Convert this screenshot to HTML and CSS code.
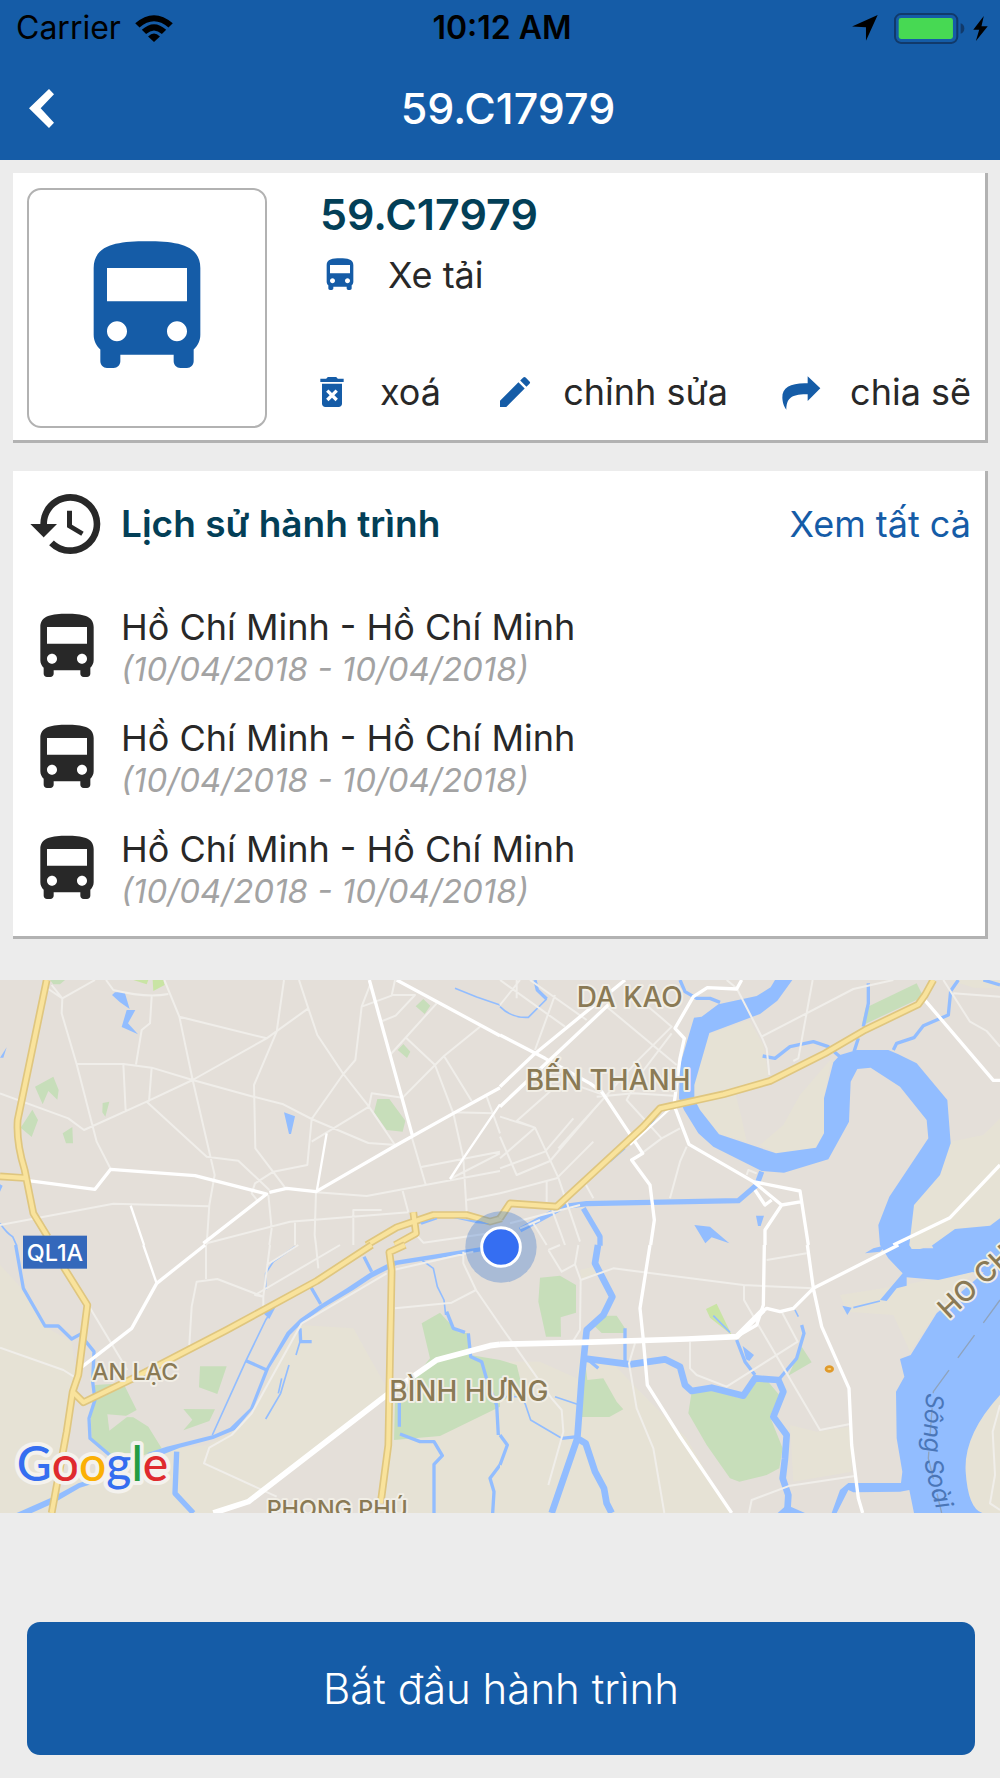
FILE: index.html
```html
<!DOCTYPE html>
<html lang="vi">
<head>
  <meta charset="UTF-8">
  <meta name="viewport" content="width=device-width, initial-scale=1.0">
  <title>59.C17979</title>
  <link rel="stylesheet" href="styles.css">
</head>
<body>
  <svg class="sprite" xmlns="http://www.w3.org/2000/svg">
    <symbol id="icon-bus" viewBox="0 0 24 24">
      <path d="M4 16c0 .88.39 1.67 1 2.22V20c0 .55.45 1 1 1h1c.55 0 1-.45 1-1v-1h8v1c0 .55.45 1 1 1h1c.55 0 1-.45 1-1v-1.78c.61-.55 1-1.34 1-2.22V6c0-3.5-3.58-4-8-4s-8 .5-8 4v10zm3.5 1c-.83 0-1.5-.67-1.5-1.5S6.67 14 7.5 14s1.5.67 1.5 1.5S8.33 17 7.5 17zm9 0c-.83 0-1.5-.67-1.5-1.5s.67-1.5 1.5-1.5 1.5.67 1.5 1.5-.67 1.5-1.5 1.5zm1.5-6H6V6h12v5z"/>
    </symbol>
  </svg>

  <header class="header">
    <div class="status-bar">
      <div class="status-left">
        <span>Carrier</span>
        <svg class="wifi" viewBox="0 0 114 82">
          <path d="M0 25Q57 -24 114 25L101 38Q57 0 13 38Z"/>
          <path d="M20 45Q57 11 94 45L81 58Q57 36 33 58Z"/>
          <path d="M39 65Q57 48 75 65L57 82Z"/>
        </svg>
      </div>
      <span class="status-time">10:12 AM</span>
      <div class="status-right">
        <svg class="location" viewBox="0 0 80 80"><path d="M79 0L43 79V38L0 35Z"/></svg>
        <svg class="battery" viewBox="0 0 212 92">
          <rect x="3" y="3" width="186" height="86" rx="18" fill="none" stroke="#113a6b" stroke-width="6"/>
          <rect x="14" y="15" width="162" height="62" rx="7" fill="#47d953"/>
          <path d="M199 30Q210 34 210 46T199 62Z" fill="#113a6b"/>
        </svg>
        <svg class="bolt" viewBox="0 0 44 76"><path d="M32 0L0 42H18L8 76L44 31H25Z"/></svg>
      </div>
    </div>
    <div class="nav-bar">
      <button class="back-btn" aria-label="Quay lại">
        <svg viewBox="0 0 75 117"><path d="M0 58L60 0L75 16L35 58L75 101L60 117Z"/></svg>
      </button>
      <h1>59.C17979</h1>
    </div>
  </header>

  <main>
    <section class="card vehicle">
      <div class="thumb">
        <svg class="icon-large"><use href="#icon-bus"/></svg>
      </div>
      <div class="vehicle-info">
        <h2>59.C17979</h2>
        <p class="vehicle-type">
          <svg class="icon"><use href="#icon-bus"/></svg>
          <span>Xe tải</span>
        </p>
        <div class="actions">
          <button class="action-btn">
            <svg class="icon" viewBox="0 0 24 24"><path d="M6 19c0 1.1.9 2 2 2h8c1.1 0 2-.9 2-2V7H6v12zm2.46-7.12l1.41-1.41L12 12.59l2.12-2.12 1.41 1.41L13.41 14l2.12 2.12-1.41 1.41L12 15.41l-2.12 2.12-1.41-1.41L10.59 14l-2.13-2.12zM15.5 4l-1-1h-5l-1 1H5v2h14V4z"/></svg>
            xoá
          </button>
          <button class="action-btn">
            <svg class="icon" viewBox="0 0 24 24"><path d="M3 17.25V21h3.75L17.81 9.94l-3.75-3.75L3 17.25zM20.71 7.04a1 1 0 0 0 0-1.41l-2.34-2.34a1 1 0 0 0-1.41 0l-1.83 1.83 3.75 3.75 1.83-1.83z"/></svg>
            chỉnh sửa
          </button>
          <button class="action-btn">
            <svg class="icon" viewBox="0 0 120 120"><path d="M115 49L77 13V34C28 32 0 46 1 77C2 96 8 106 13 113C14 80 26 66 77 67V87Z"/></svg>
            chia sẽ
          </button>
        </div>
      </div>
    </section>

    <section class="card history">
      <div class="history-header">
        <svg class="icon-medium" viewBox="0 0 24 24"><path d="M13 3c-4.97 0-9 4.03-9 9H1l3.89 3.89.07.14L9 12H6c0-3.87 3.13-7 7-7s7 3.13 7 7-3.13 7-7 7c-1.93 0-3.68-.79-4.94-2.06l-1.42 1.42A8.95 8.95 0 0 0 13 21a9 9 0 0 0 0-18zm-1 5v5l4.28 2.54.72-1.21-3.5-2.08V8H12z"/></svg>
        <h3>Lịch sử hành trình</h3>
        <a href="#">Xem tất cả</a>
      </div>
      <ul class="trips">
        <li class="trip">
          <svg class="icon-medium"><use href="#icon-bus"/></svg>
          <div>
            <p>Hồ Chí Minh - Hồ Chí Minh</p>
            <p class="trip-date">(10/04/2018 - 10/04/2018)</p>
          </div>
        </li>
        <li class="trip">
          <svg class="icon-medium"><use href="#icon-bus"/></svg>
          <div>
            <p>Hồ Chí Minh - Hồ Chí Minh</p>
            <p class="trip-date">(10/04/2018 - 10/04/2018)</p>
          </div>
        </li>
        <li class="trip">
          <svg class="icon-medium"><use href="#icon-bus"/></svg>
          <div>
            <p>Hồ Chí Minh - Hồ Chí Minh</p>
            <p class="trip-date">(10/04/2018 - 10/04/2018)</p>
          </div>
        </li>
      </ul>
    </section>

    <svg class="map" viewBox="0 0 3000 1599" xmlns="http://www.w3.org/2000/svg">
      <!-- north west -->
      <g transform="translate(0 -15)">
        <path class="park" d="M150 15H195L180 28H160ZM105 335L160 305L176 345L172 374L145 348L128 388ZM97 404L114 435L95 486L62 458ZM308 384L328 380L316 425L307 412ZM188 475L217 456L219 505H198ZM1247 94L1270 72L1291 92L1274 117ZM1193 225L1210 207L1231 230L1221 249ZM1132 372H1168L1216 437L1208 470L1160 465L1122 412Z"/>
        <path class="park-light" d="M400 15H445L440 28ZM458 15H490L494 30L460 48Z"/>
        <path class="water" d="M336 60L345 52H374L389 102L360 82ZM380 105H406L384 145L414 178L365 156ZM852 412L885 424L873 477H867ZM0 248L20 217L10 248ZM0 628L8 632L0 650Z"/>
        <path class="stream" d="M1365 40L1430 66L1500 90M0 745Q20 775 38 785L50 812"/>
        <path class="road-minor" d="M145 42L187 70L285 15M187 70L185 115L230 268L290 500L332 582M155 30L187 70M318 15L340 45Q440 70 505 57M493 15L538 125L578 315L644 600L628 690L620 810M538 125L800 190L578 315L440 380L252 465L205 430L0 355M230 267H370L455 278L578 315L760 365L850 388L935 432L1105 504L1190 510M370 267L377 408M455 278L447 380M455 65L450 145L425 165L408 268M852 15L830 170L762 330L766 520L857 640M800 190L925 100M897 15L925 100L952 180L1030 297L1107 395L1185 510M440 380L620 545L715 557L808 645M0 750L340 686L625 694M1110 30L1085 95L1066 255L1030 297L935 432L922 570L820 590L765 625L755 655L775 680M1085 95L1175 62L1185 15M1107 395L1115 355L1208 368L1332 243L1440 155M935 500L1107 395M1147 138L1187 122L1245 60H1175M1170 240L1310 85M1218 188L1305 270L1360 415L1390 550L1400 710M1332 243L1415 378M1360 412L1480 415M1235 485L1278 632M1260 577L1500 530M950 652L1100 663L1500 588M805 660L815 760L808 810M948 652L944 780L948 810M620 805L870 740L1225 712M1060 810V705H1145M885 740V810M1208 648L1225 712M1350 612L1500 535M1460 365L1500 475M1400 675L1500 655M1245 775L1270 803L1500 770"/>
        <path class="road" d="M85 617L285 643L332 583L585 602L800 657L610 805M808 652L860 640L948 650L1190 510L1360 415L1500 338M1108 15L1238 485M1190 15L1500 182"/>
        <path class="road thin" d="M980 475L950 650M1350 612L1390 550L1500 388M392 692L432 810"/>
        <path class="highway-edge" d="M140 15L53 435Q48 500 74 585L90 665L100 715L143 785M0 604L74 609M1100 810L1190 757L1300 720H1400L1470 740L1505 730M1185 810L1248 775L1240 712"/>
        <path class="highway" d="M140 15L53 435Q48 500 74 585L90 665L100 715L143 785M0 604L74 609M1100 810L1190 757L1300 720H1400L1470 740L1505 730M1185 810L1248 775L1240 712"/>
        <path class="water" d="M1260 743L1310 729L1312 733L1265 749ZM1360 729L1440 738L1470 748L1430 745Z"/>
      </g>

      <!-- north east -->
      <g transform="translate(1500 -15)">
        <path class="sand" d="M628 176L748 135L790 210L808 320L705 350L725 430L740 500L657 478L583 385V320ZM995 250L972 370V475L945 520L828 535L780 510L850 450L900 360ZM1350 15H1500V40L1420 38ZM1500 430L1450 480L1352 500L1320 600L1242 690L1225 790V810H1500Z"/>
        <path class="park" d="M1097 98L1250 25L1270 65L1085 152Z"/>
        <path class="water" d="M825 15H877L832 77L780 117L628 174L583 330V372L600 405L657 478L828 535L948 518L972 475V370L1000 262L1020 240L1070 225H1165L1195 238L1250 265L1342 375L1352 505L1320 600L1242 690L1228 810H1140L1135 750L1168 665L1285 490L1280 435L1200 335L1112 278L1072 282L1052 320L1047 440L985 553L852 593L785 588L640 515L595 475L552 405L537 370L540 270L582 128L605 125L655 88L770 63L812 37Z"/>
        <path class="water" d="M583 750L630 755L688 805L635 787L616 805ZM768 722H792L782 753H774ZM1295 812L1365 762L1470 752L1500 730V812Z"/>
        <path class="canal" d="M60 765L190 695L260 686L715 677L770 630L785 590"/>
        <path class="canal" d="M250 700L300 785V812"/>
        <path class="stream wide" d="M788 243L825 250L870 215L940 200L985 215L1020 245M1180 225L1190 205L1242 188L1270 152L1345 120L1352 48L1375 15M1105 25V85L1090 155M1075 190L1062 230M540 15L555 50L590 70H630L660 82M105 15L112 45L140 72M1450 15L1500 30"/>
        <path class="stream" d="M0 95Q35 130 85 127L140 72M465 430L445 460M375 520L330 560"/>
        <path class="road-minor" d="M0 15L195 155M50 15V70M90 15L260 135M165 60L105 225M0 90L60 15M320 95L530 270M445 95L515 155L410 260L280 405L175 520M515 175L420 300L380 375L485 490L540 460M0 425L105 458L175 608L240 800M105 458L50 438L155 345M105 458L0 550M0 580L135 530L220 430M0 485L50 600L150 558L280 405M0 655L170 610L280 500M140 620V680M255 625L280 670M290 365L400 355L520 362M325 365L240 335M560 515L540 560L510 670M680 15L710 40L785 185L800 220L808 300M785 185L1060 42L1180 15M938 15L895 250L880 258M1330 15L1410 140L1460 168L1500 215M1360 55L1500 65M30 745L240 690M100 745L140 810M155 700L195 810M740 600L745 585L770 595M425 535L485 490M60 760L120 735"/>
        <path class="road" d="M375 15L100 240L0 335M330 85L0 395M0 180L135 250L270 325L305 350L428 535L395 555L450 630L463 735L452 810M725 15L710 42L622 38L580 65L525 160L553 190L540 250L522 390L567 508L760 620L900 648L925 810M760 620L845 690L905 680M845 690L795 765V810M765 645L795 690L815 675M1270 70L1480 316H1500M1180 810L1350 728L1500 570"/>
        <path class="road thin" d="M522 390L445 460L390 510"/>
        <path class="highway-edge" d="M0 730L30 685L170 695L430 455L480 400L670 358L810 318L975 235L1095 165L1255 88L1275 60L1300 15"/>
        <path class="highway" d="M0 730L30 685L170 695L430 455L480 400L670 358L810 318L975 235L1095 165L1255 88L1275 60L1300 15"/>
      </g>

      <!-- south west -->
      <g transform="translate(0 795)">
        <path class="sand" d="M0 60L65 130L135 245L215 290L230 390L210 440L190 600L165 700L155 804H0ZM240 690L330 650L460 620L620 600L700 560L760 500L830 340L900 240L1060 250L1155 420V460L750 770L640 804H165L170 740ZM1180 470L1500 440V804H1145L1170 600Z"/>
        <path class="park" d="M600 364H680L652 447L597 427ZM550 492L645 493L628 528L550 556L577 524ZM285 420L370 415L410 495L372 516L400 517L445 545L485 610L420 635L335 640L275 590L272 500ZM1265 235L1320 203L1340 225L1375 262L1405 265L1410 330L1500 345V485L1320 573L1182 585L1185 470L1290 340Z"/>
        <path class="land" d="M322 508L385 513L328 557Z"/>
        <path class="water" d="M50 804L160 755L235 715L330 685V700L240 728L160 775L95 804ZM440 625L500 605L640 570L690 548L750 490L795 375L860 262L900 222L960 180L1040 130L1110 83L1180 48L1450 5V18L1190 60L1115 98L1060 135L970 188L905 235L870 270L808 370L760 490L705 555L640 582L540 608L490 628ZM790 205L830 180L808 222Z"/>
        <path class="canal" d="M530 620L525 745L580 804"/>
        <path class="stream wide" d="M47 0L70 130L135 243H175L215 282L240 268L282 320L278 410L285 465L267 520L270 580L335 635M738 347L800 375M930 122L962 177M1092 35L1115 80M900 250L902 290H935M1200 567L1260 590H1302L1327 632L1302 658V804M1198 455V545M1340 200L1360 250L1395 262M1405 265L1412 335L1445 350L1465 420L1490 480L1495 570M1500 660L1470 700L1482 740L1478 804"/>
        <path class="stream" d="M930 122L825 182L797 225L738 347L637 570M885 5L820 50L797 85V135M900 290L888 330M867 360L842 445L797 522M845 400L835 445M1265 45L1300 70L1312 125L1332 165L1337 210"/>
        <path class="road-minor" d="M268 185L382 375M0 308L190 375L230 400M618 0V102M568 300L575 185L590 110L652 102L790 155L765 150L1020 0M810 0L790 155V190M800 60L895 0M948 0L955 70M905 235L755 505L695 570L628 608L612 655L830 755M1160 85L905 235M1185 190L1355 173L1428 135L1390 55V20M1428 135L1500 240M1180 75L1420 20"/>
        <path class="road" d="M470 115L395 250L240 370M470 115L615 0"/>
        <path class="road thin" d="M430 0L470 115"/>
        <path class="road major" d="M640 804L745 770L1160 450L1310 345L1470 302L1500 298"/>
        <path class="highway-edge" d="M190 65L262 180L235 390L218 440L200 560L155 804M218 440L250 472L420 390L680 255L950 108L1115 0M1215 0L1168 22L1175 75L1165 600L1142 775"/>
        <path class="highway" d="M190 65L262 180L235 390L218 440L200 560L155 804M218 440L250 472L420 390L680 255L950 108L1115 0M1215 0L1168 22L1175 75L1165 600L1142 775"/>
      </g>

      <!-- south east -->
      <g transform="translate(1500 795)">
        <path class="sand" d="M0 350L120 350L230 400L240 330L330 345L400 420L480 500L560 580L690 804H0ZM870 540L950 560L1050 545L1055 680L880 710ZM1020 150L1210 120L1310 100L1420 80L1310 200L1230 320L1180 210L1040 200ZM240 75L280 65L290 90L245 105Z"/>
        <path class="park" d="M120 98L180 92L228 120V203L182 217L183 275H138L115 170ZM320 212H350L375 250V264H305L280 240ZM0 345L50 360L70 440L0 470ZM255 345L262 405L310 400L350 470L370 493L328 516H240ZM575 440L640 435L720 460L770 410L800 405L838 450L810 515L848 610L838 670L800 690L718 710L690 700L620 600L565 505ZM905 305L935 352L865 392Z"/>
        <path class="park-light" d="M618 192L650 176L695 270L630 218Z"/>
        <path class="water" d="M1140 0H1228L1240 10H1300L1295 0H1500V80L1415 82L1315 105L1220 97V122L1190 130L1160 168L1140 165L1208 85L1165 40ZM1310 205L1500 40V804H1242L1228 735L1200 740L1060 742L1045 735L1010 804H995L1020 735L1045 714H1203L1207 680L1190 580L1188 440L1213 395L1200 342L1232 330ZM1027 182L1055 188L1042 210ZM728 303L762 330L748 348L738 343ZM833 804L860 780L915 804ZM1095 25L1120 10L1160 0L1140 20Z"/>
        <path class="sand" d="M1420 82L1330 105L1310 150L1340 178ZM1228 0H1300L1260 12H1235ZM1500 450Q1390 570 1397 680T1447 804H1500Z"/>
        <path class="canal river" d="M294 0L285 55L337 155L310 210L260 255L245 400L232 580L155 804M232 580L257 595L285 680L312 730L320 775L335 804M250 340L390 358L495 343L540 365L555 420L575 438L635 428L730 452L765 400L835 405L850 440L820 515L860 570L855 640L848 700L865 750L862 800"/>
        <path class="stream wide" d="M375 250V350M265 345L295 370M905 240L912 265L890 340L835 405M710 285L735 350L765 390M185 580L232 575M0 570L22 600L0 660"/>
        <path class="stream" d="M640 212L690 262M165 455L232 478M75 475L92 525L185 580M885 195L895 215M1060 188L1140 168M0 455H60L75 475"/>
        <path class="road-minor" d="M145 15L185 80L225 58L235 0M225 58L242 105L240 255L218 290M242 105L340 70L730 120L940 130M145 15L180 0M0 240L60 325L155 460L185 495L190 560L145 720M800 45L920 25M732 120V165L775 240L960 555L1050 537M845 200L893 290L680 425L590 390L570 370V290M405 295L387 355L410 490L460 610L493 804M747 804L755 765L870 722L1065 693M1500 480L1478 560L1485 690L1470 775L1500 795"/>
        <path class="road" d="M450 0L420 190L430 285L442 420L540 575L695 804M793 0L790 180L770 240L710 275M770 215L800 190L840 200L880 190L940 130L1195 0M922 0L940 130L965 245L1047 430L1055 600L1075 760L1088 804"/>
        <path class="road major" d="M0 298L250 292L560 282L710 275L790 195"/>
        <path class="ferry" d="M1500 165L1300 440L1285 640L1325 804"/>
        <ellipse cx="988" cy="372" rx="10" ry="7" fill="#f6d37d" stroke="#e09a2b" stroke-width="8"/>
      </g>

      <g class="place">
        <text x="1730" y="80">DA KAO</text>
        <text x="1577" y="330">BẾN THÀNH</text>
        <text x="1168" y="1262">BÌNH HƯNG</text>
        <text class="small" x="276" y="1200">AN LẠC</text>
        <text class="small" x="800" y="1612">PHONG PHÚ</text>
        <text transform="translate(2846 1020) rotate(-43)">HO CHI</text>
      </g>
      <path id="river-line" d="M2780 1238Q2762 1420 2784 1500T2826 1640" fill="none"/>
      <text class="river-name"><textPath href="#river-line">Sông Soài</textPath></text>

      <rect x="69" y="767" width="192" height="99" fill="#3468bb"/>
      <text class="route" x="165" y="842">QL1A</text>

      <text class="google" x="50" y="1503"><tspan fill="#356ef0">G</tspan><tspan fill="#df2a2e">o</tspan><tspan fill="#fbb005">o</tspan><tspan fill="#356ef0">g</tspan><tspan fill="#259c43">l</tspan><tspan fill="#df2a2e">e</tspan></text>

      <circle cx="1503" cy="801" r="107" fill="#2f6fd0" fill-opacity=".32"/>
      <circle cx="1503" cy="801" r="58" fill="#356ef2" stroke="#fff" stroke-width="9"/>
    </svg>

    <div class="footer">
      <button class="start-btn">Bắt đầu hành trình</button>
    </div>
  </main>
</body>
</html>
```

FILE: styles.css
```css
* {
  margin: 0;
  padding: 0;
  box-sizing: border-box;
}

:root {
  --primary: #155ca7;
  --heading: #033f57;
  --text: #282828;
  --muted: #a3a3a3;
  --border: #b2b2b2;
  --bg: #ececec;
}

body {
  font-family: Inter, "Noto Sans", sans-serif;
  font-size: 36px;
  line-height: 44px;
  background-color: var(--bg);
  color: var(--text);
}

svg {
  display: block;
  flex-shrink: 0;
}

button {
  font: inherit;
  color: inherit;
  background: none;
  border: none;
  cursor: pointer;
}

.sprite {
  position: absolute;
  width: 0;
  height: 0;
}

/* Header */
.header {
  background-color: var(--primary);
}

.status-bar {
  display: grid;
  grid-template-columns: 1fr auto 1fr;
  align-items: center;
  height: 56px;
  padding: 0 12px 0 16px;
  font-size: 32px;
  color: #000;
}

.status-left {
  display: flex;
  align-items: center;
  gap: 14px;
}

.status-time {
  font-weight: 600;
}

.status-right {
  display: flex;
  align-items: center;
  justify-content: flex-end;
}

.wifi {
  width: 38px;
  height: 27px;
}

.location {
  width: 26px;
  height: 26px;
  margin-right: 16px;
}

.battery {
  width: 71px;
  height: 31px;
  margin-right: 8px;
}

.bolt {
  width: 15px;
  height: 25px;
}

.nav-bar {
  display: grid;
  grid-template-columns: 1fr auto 1fr;
  align-items: center;
  height: 104px;
  padding: 0 13px 0 29px;
}

.back-btn {
  justify-self: start;
}

.back-btn svg {
  width: 25px;
  height: 39px;
  fill: #fff;
}

h1 {
  font-size: 43px;
  font-weight: 500;
  color: #fff;
}

/* Cards */
.card {
  margin: 13px 12px 0 13px;
  background-color: #fff;
  border-right: 3px solid var(--border);
  border-bottom: 3px solid var(--border);
}

.vehicle {
  display: flex;
  gap: 45px;
  padding: 15px 14px 12px;
}

.thumb {
  display: flex;
  align-items: center;
  justify-content: center;
  width: 240px;
  height: 240px;
  border: 2px solid var(--border);
  border-radius: 14px;
}

.icon,
.icon-large {
  fill: var(--primary);
}

.icon {
  width: 40px;
  height: 40px;
}

.icon-medium {
  width: 80px;
  height: 80px;
  fill: var(--text);
}

.icon-large {
  width: 160px;
  height: 160px;
}

.vehicle-info {
  display: flex;
  flex: 1;
  flex-direction: column;
}

.vehicle-info h2 {
  padding-left: 8px;
  font-size: 43px;
  font-weight: 600;
  line-height: 52px;
  color: var(--heading);
}

.vehicle-type {
  display: flex;
  align-items: center;
  gap: 28px;
  margin-top: 13px;
  padding-left: 8px;
}

.actions {
  display: flex;
  justify-content: space-between;
  margin-top: auto;
  padding-bottom: 14px;
}

.action-btn {
  display: flex;
  align-items: center;
  gap: 28px;
}

.history {
  margin-top: 28px;
  padding: 13px 14px 25px;
}

.history-header {
  display: flex;
  align-items: center;
  gap: 14px;
}

.history-header h3 {
  flex: 1;
  font-size: 37px;
  font-weight: 600;
  color: var(--heading);
}

.history-header a {
  color: var(--primary);
  text-decoration: none;
}

.trips {
  margin-top: 41px;
  list-style: none;
}

.trip {
  display: flex;
  align-items: center;
  gap: 14px;
  height: 84px;
}

.trip + .trip {
  margin-top: 27px;
}

.trip-date {
  font-size: 33px;
  font-style: italic;
  line-height: 40px;
  color: var(--muted);
}

/* Map */
.map {
  width: 100%;
  height: auto;
  margin-top: 41px;
  background-color: #e4dfd9;
  overflow: hidden;
}

.land { fill: #e4dfd9; }
.sand { fill: #e6e2d5; }
.park { fill: #c7deba; }
.park-light { fill: #c9e4a4; }
.water { fill: #92bdff; }

.stream,
.canal,
.road,
.road-minor,
.highway,
.highway-edge,
.ferry {
  fill: none;
  stroke-linejoin: round;
}

.stream,
.canal {
  stroke: #92bdff;
  stroke-width: 5;
}

.stream.wide { stroke-width: 10; }
.canal { stroke-width: 16; }
.canal.river { stroke-width: 20; }

.road-minor {
  stroke: #f0eeea;
  stroke-width: 6;
}

.road {
  stroke: #fff;
  stroke-width: 10;
}

.road.thin { stroke-width: 7; }
.road.major { stroke-width: 17; }

.highway-edge {
  stroke: #dfc67f;
  stroke-width: 23;
}

.highway {
  stroke: #f9e39c;
  stroke-width: 13;
}

.ferry {
  stroke: #8fa3bd;
  stroke-width: 4;
  stroke-dasharray: 85 45;
}

.place text {
  font-size: 84px;
  font-weight: 500;
  fill: #8a7a55;
  stroke: #f1eee6;
  stroke-width: 12;
  stroke-linejoin: round;
  paint-order: stroke;
}

.place .small {
  font-size: 70px;
}

.river-name {
  font-size: 74px;
  font-style: italic;
  fill: #4a76b8;
}

.route {
  font-size: 70px;
  font-weight: 500;
  text-anchor: middle;
  fill: #fff;
}

.google {
  font-family: Lato, sans-serif;
  font-size: 144px;
  font-weight: 500;
  stroke: #f4f2ee;
  stroke-width: 24;
  stroke-linejoin: round;
  paint-order: stroke;
}

/* Footer */
.footer {
  padding: 109px 25px 23px 27px;
}

.start-btn {
  display: block;
  width: 100%;
  height: 133px;
  font-size: 42px;
  font-weight: 300;
  color: #fff;
  background-color: var(--primary);
  border-radius: 13px;
}
```
